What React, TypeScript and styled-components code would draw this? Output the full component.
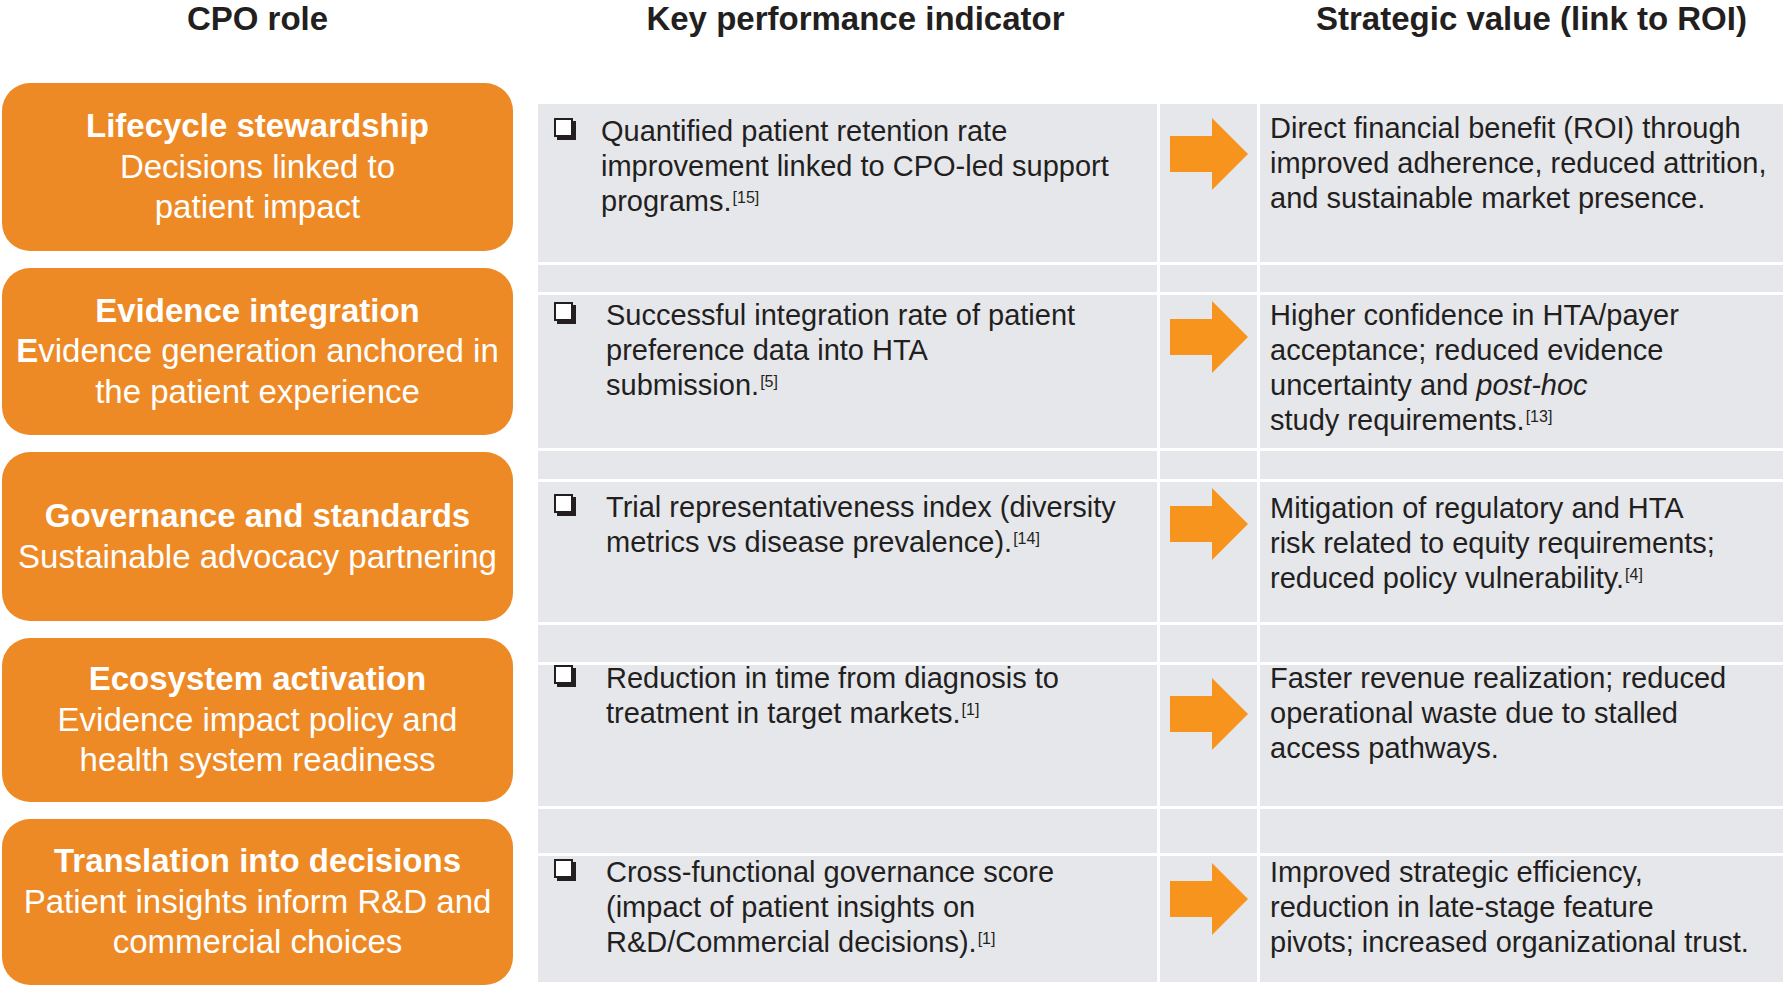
import React from 'react'
import styled, { createGlobalStyle } from 'styled-components'

const GlobalStyle = createGlobalStyle`
  html, body { margin: 0; padding: 0; background: #ffffff; }
  body { font-family: "Liberation Sans", Arial, Helvetica, sans-serif; color: #231f20; }
`

const Page = styled.div`
  display: flex;
  gap: 25px;
  padding-left: 2px;
  width: 1783px;
  box-sizing: border-box;
`

const RoleColumn = styled.div`
  width: 511px;
  flex-shrink: 0;
  display: flex;
  flex-direction: column;
`

const Heading = styled.h2<{ $shift?: number }>`
  margin: 0;
  height: 38px;
  line-height: 38px;
  font-size: 33px;
  font-weight: 700;
  text-align: center;
  white-space: nowrap;
  padding-left: ${p => p.$shift ?? 0}px;
  color: #231f20;
`

const RoleList = styled.div`
  margin-top: 45px;
  display: flex;
  flex-direction: column;
  gap: 17px;
`

const RoleBox = styled.div<{ $h: number }>`
  height: ${p => p.$h}px;
  background: #ee8a26;
  border-radius: 28px;
  color: #ffffff;
  display: flex;
  flex-direction: column;
  justify-content: center;
  align-items: center;
  text-align: center;
  font-size: 33px;
  line-height: 40.5px;
  white-space: nowrap;
`

const RoleTitle = styled.div`
  font-weight: 700;
`

const RoleText = styled.div`
  font-weight: 400;
`

const TableColumn = styled.div`
  flex: 1;
  display: flex;
  flex-direction: column;
`

const HeadRow = styled.div`
  display: grid;
  grid-template-columns: 619px 97px 1fr;
  column-gap: 3px;
`

const Grid = styled.div<{ $rows: string }>`
  margin-top: 66px;
  display: grid;
  grid-template-columns: 619px 97px 1fr;
  grid-template-rows: ${p => p.$rows};
  gap: 3px;
  background: #ffffff;
`

const Cell = styled.div`
  background: #e6e7eb;
  font-size: 29px;
  line-height: 35px;
  color: #231f20;
`

const KpiCell = styled(Cell)`
  padding-left: 16px;
`

const KpiBody = styled.div<{ $top: number }>`
  display: flex;
  align-items: flex-start;
  margin-top: ${p => p.$top}px;
`

const CheckBox = styled.span`
  flex: none;
  width: 19px;
  height: 19px;
  box-sizing: border-box;
  margin-top: 4px;
  border: 2px solid #231f20;
  background: #ffffff;
  box-shadow: 3px 3px 0 #231f20;
`

const Lines = styled.div<{ $indent?: number }>`
  margin-left: ${p => p.$indent ?? 0}px;
  white-space: nowrap;
`

const ArrowCell = styled(Cell)<{ $top: number }>`
  display: flex;
  justify-content: center;
  align-items: flex-start;
  padding-top: ${p => p.$top}px;
`

const ValueCell = styled(Cell)`
  padding-left: 10px;
`

const ValueBody = styled.div<{ $top: number }>`
  margin-top: ${p => p.$top}px;
  white-space: nowrap;
`

const Ref = styled.sup`
  font-size: 16px;
  line-height: 0;
  vertical-align: baseline;
  position: relative;
  top: -8px;
  margin-left: 1px;
`

const Arrow = () => (
  <svg width="78" height="72" viewBox="0 0 78 72">
    <polygon points="0,18 42,18 42,0 78,36 42,72 42,54 0,54" fill="#f7941e" />
  </svg>
)

const roles = [
  { h: 168, title: 'Lifecycle stewardship', lines: ['Decisions linked to', 'patient impact'] },
  { h: 167, title: 'Evidence integration', lines: [<><b>E</b>vidence generation anchored in</>, 'the patient experience'] },
  { h: 169, title: 'Governance and standards', lines: ['Sustainable advocacy partnering'] },
  { h: 164, title: 'Ecosystem activation', lines: ['Evidence impact policy and', 'health system readiness'] },
  { h: 166, title: 'Translation into decisions', lines: ['Patient insights inform R&D and', 'commercial choices'] },
]

type Row = {
  h: number
  after?: number
  kpiTop: number
  indent: number
  arrowTop: number
  valTop: number
  kpi: React.ReactNode[]
  value: React.ReactNode[]
}

const rows: Row[] = [
  {
    h: 158, after: 27, kpiTop: 10, indent: 28, arrowTop: 14, valTop: 7,
    kpi: ['Quantified patient retention rate', 'improvement linked to CPO-led support', <>programs.<Ref>[15]</Ref></>],
    value: ['Direct financial benefit (ROI) through', 'improved adherence, reduced attrition,', 'and sustainable market presence.'],
  },
  {
    h: 153, after: 28, kpiTop: 3, indent: 33, arrowTop: 6, valTop: 3,
    kpi: ['Successful integration rate of patient', 'preference data into HTA', <>submission.<Ref>[5]</Ref></>],
    value: ['Higher confidence in HTA/payer', 'acceptance; reduced evidence', <>uncertainty and <i>post-hoc</i></>, <>study requirements.<Ref>[13]</Ref></>],
  },
  {
    h: 140, after: 37, kpiTop: 8, indent: 33, arrowTop: 6, valTop: 9,
    kpi: ['Trial representativeness index (diversity', <>metrics vs disease prevalence).<Ref>[14]</Ref></>],
    value: ['Mitigation of regulatory and HTA', 'risk related to equity requirements;', <>reduced policy vulnerability.<Ref>[4]</Ref></>],
  },
  {
    h: 141, after: 44, kpiTop: -4, indent: 33, arrowTop: 13, valTop: -4,
    kpi: ['Reduction in time from diagnosis to', <>treatment in target markets.<Ref>[1]</Ref></>],
    value: ['Faster revenue realization; reduced', 'operational waste due to stalled', 'access pathways.'],
  },
  {
    h: 126, kpiTop: -1, indent: 33, arrowTop: 7, valTop: -1,
    kpi: ['Cross-functional governance score', '(impact of patient insights on', <>R&amp;D/Commercial decisions).<Ref>[1]</Ref></>],
    value: ['Improved strategic efficiency,', 'reduction in late-stage feature', 'pivots; increased organizational trust.'],
  },
]

const gridRows = rows
  .flatMap(r => (r.after ? [r.h, r.after] : [r.h]))
  .map(v => v + 'px')
  .join(' ')

function App() {
  return (
    <>
      <GlobalStyle />
      <Page>
        <RoleColumn>
          <Heading>CPO role</Heading>
          <RoleList>
            {roles.map((r, i) => (
              <RoleBox key={i} $h={r.h}>
                <RoleTitle>{r.title}</RoleTitle>
                {r.lines.map((l, j) => (
                  <RoleText key={j}>{l}</RoleText>
                ))}
              </RoleBox>
            ))}
          </RoleList>
        </RoleColumn>
        <TableColumn>
          <HeadRow>
            <Heading $shift={16}>Key performance indicator</Heading>
            <div />
            <Heading $shift={20}>Strategic value (link to ROI)</Heading>
          </HeadRow>
          <Grid $rows={gridRows}>
            {rows.map((r, i) => (
              <React.Fragment key={i}>
                <KpiCell>
                  <KpiBody $top={r.kpiTop}>
                    <CheckBox />
                    <Lines $indent={r.indent}>
                      {r.kpi.map((l, j) => (
                        <div key={j}>{l}</div>
                      ))}
                    </Lines>
                  </KpiBody>
                </KpiCell>
                <ArrowCell $top={r.arrowTop}>
                  <Arrow />
                </ArrowCell>
                <ValueCell>
                  <ValueBody $top={r.valTop}>
                    {r.value.map((l, j) => (
                      <div key={j}>{l}</div>
                    ))}
                  </ValueBody>
                </ValueCell>
                {r.after ? (
                  <>
                    <Cell />
                    <Cell />
                    <Cell />
                  </>
                ) : null}
              </React.Fragment>
            ))}
          </Grid>
        </TableColumn>
      </Page>
    </>
  )
}

export default App
